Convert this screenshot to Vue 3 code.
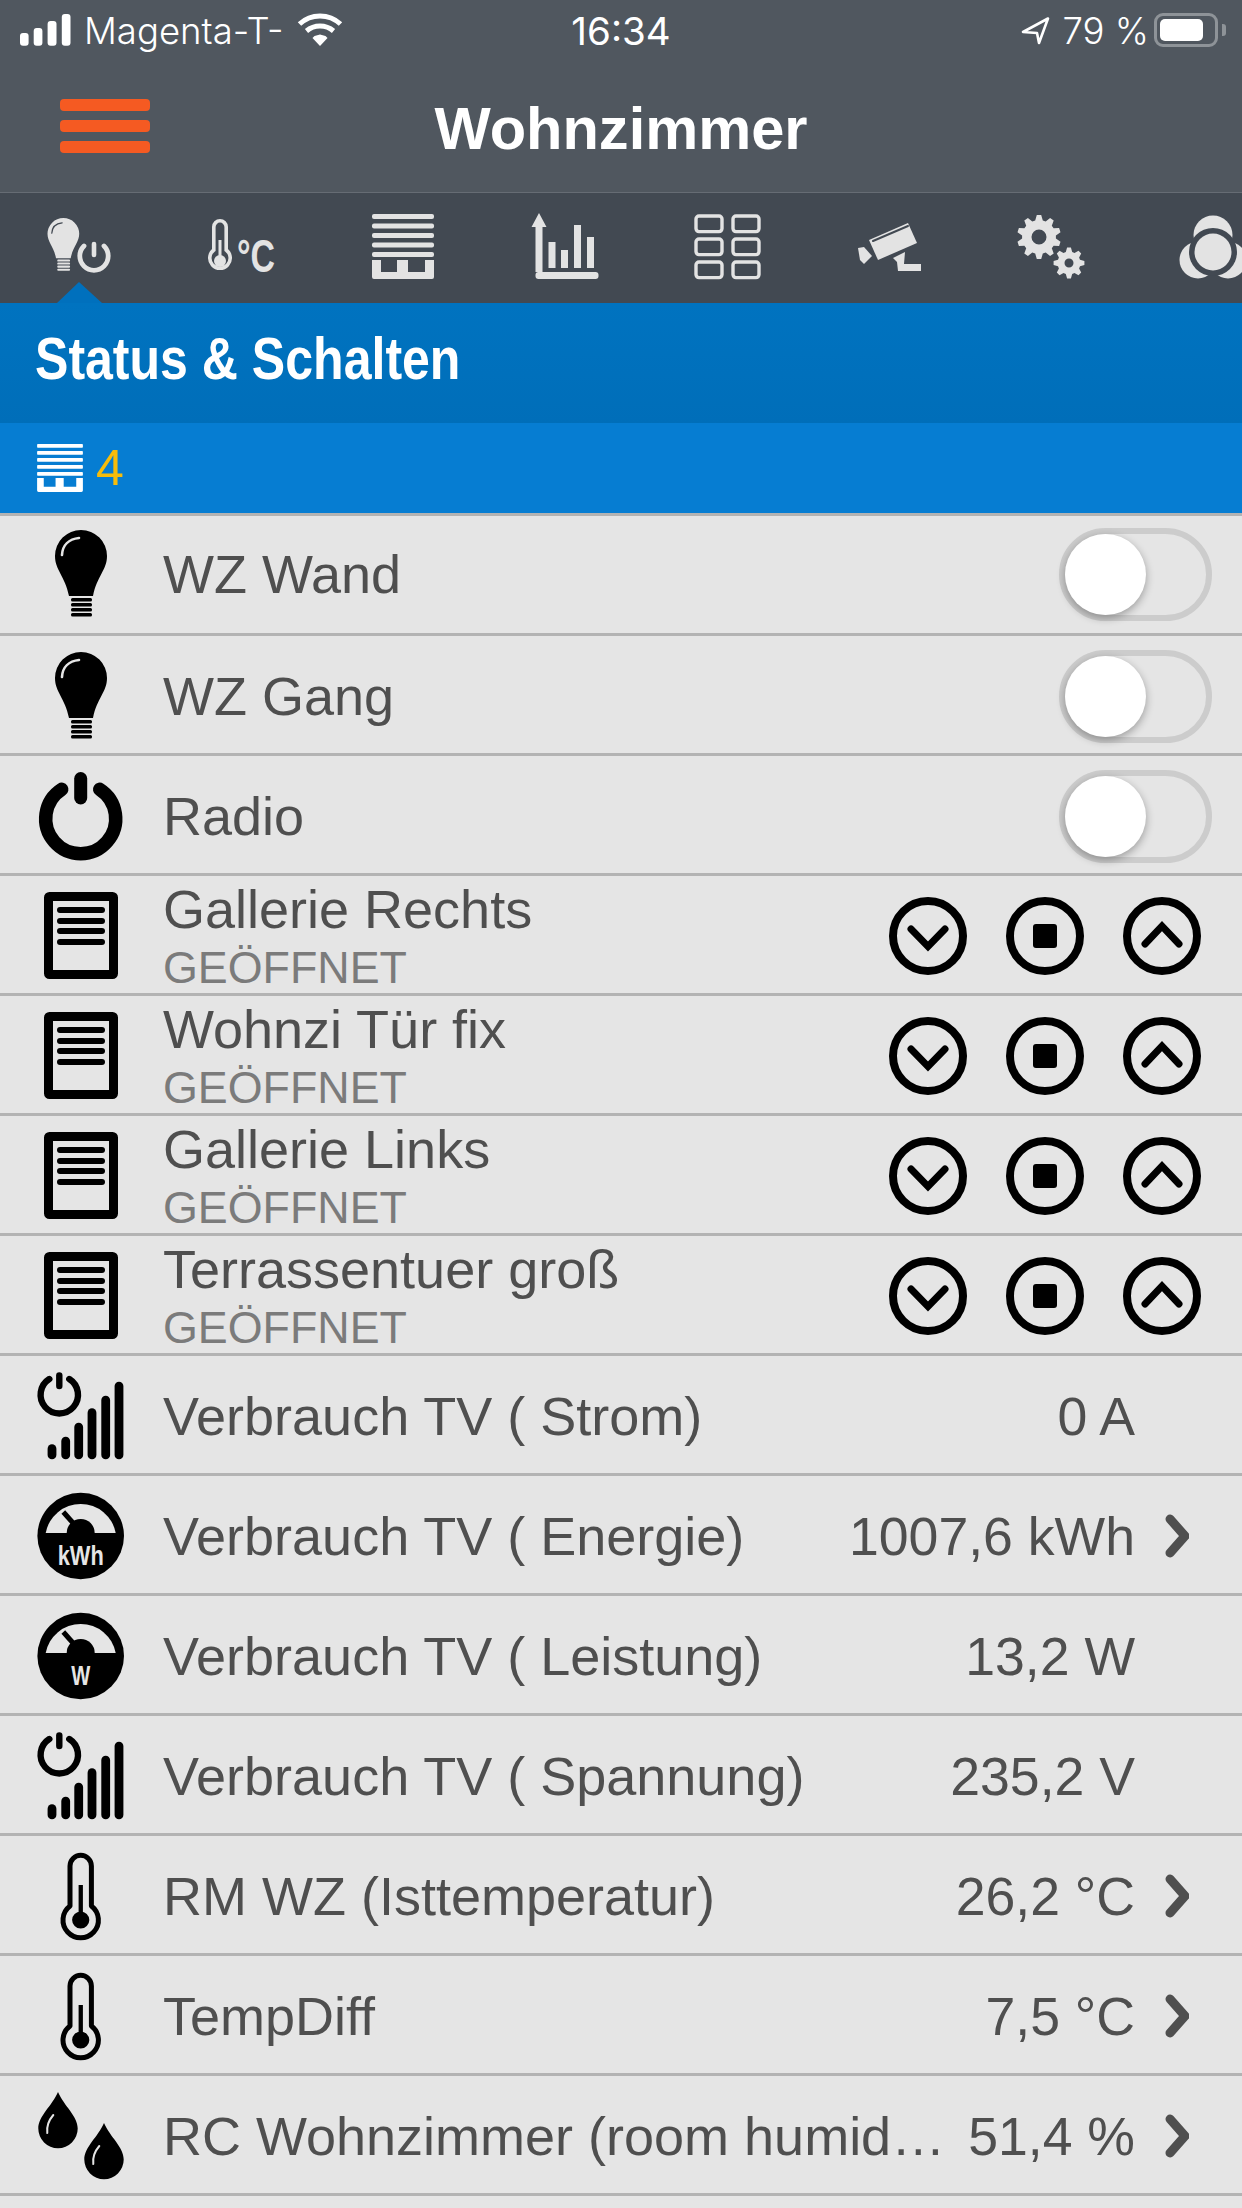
<template>
  <div class="screen">
    <header class="top">
      <div class="status">
        <div class="status-left">
          <svg class="signal" width="52" height="34" viewBox="20 13 52 34">
            <rect x="20" y="33" width="8.6" height="12.7" rx="3" />
            <rect x="33.7" y="28" width="8.7" height="17.7" rx="3" />
            <rect x="47.6" y="21" width="8.9" height="24.7" rx="3" />
            <rect x="61.8" y="14" width="8.7" height="31.7" rx="3" />
          </svg>
          <span class="carrier">Magenta-T-</span>
          <svg class="wifi" width="46" height="34" viewBox="296 13 46 34">
            <path d="M298.5 24 A30 30 0 0 1 339.5 24" />
            <path d="M305.5 31 A21 21 0 0 1 332.5 31" />
            <polygon class="wifi-dot" points="319,46 311.5,38 313.5,36 319,34.5 324.5,36 326.5,38" />
          </svg>
        </div>
        <span class="clock">16:34</span>
        <div class="status-right">
          <svg class="arrow" width="30" height="29" viewBox="1021 16 30 29">
            <path d="M1049 18.5 L1024 32 L1038 33 L1040 43 Z" />
          </svg>
          <span class="percent">79 %</span>
          <span class="battery"><span class="battery-fill"></span></span>
          <span class="battery-nub"></span>
        </div>
      </div>
      <div class="nav">
        <div class="burger"><span></span><span></span><span></span></div>
        <h1>Wohnzimmer</h1>
        <div></div>
      </div>
    </header>

    <nav class="tabs">
      <svg class="tab" viewBox="-2 193 162 110">
        <g transform="translate(47.5 218) scale(0.61)">
          <path :d="bulbBody" />
          <rect v-for="y in bulbStripes" :key="y" x="16" :y="y" width="21" height="3.4" rx="1.5" />
          <path class="cut-tab" d="M7 25 C7.5 15 14 9 24 8" />
        </g>
        <path class="line-tab" stroke-width="4.8" d="M84 246 A14.2 14.2 0 1 0 104 246" />
        <path class="line-tab" stroke-width="4.6" d="M94 244 V255" />
        <polygon class="pointer" points="79,282 102,303 57,303" />
      </svg>
      <svg class="tab" viewBox="160 193 162 110">
        <path class="line-tab" stroke-width="3.6" d="M213.8 250 V227 A6.2 6.2 0 0 1 226.2 227 V250 A10.2 10.2 0 1 1 213.8 250 Z" />
        <circle cx="220" cy="261" r="6" />
        <rect x="218.5" y="240" width="3" height="20" />
        <text class="tab-unit" x="237" y="272" textLength="38" lengthAdjust="spacingAndGlyphs">°C</text>
      </svg>
      <svg class="tab" viewBox="322 193 162 110">
        <g v-for="y in slats" :key="y">
          <rect x="372" :y="y" width="62" height="5" rx="2" />
        </g>
        <path :d="blindBase" />
      </svg>
      <svg class="tab" viewBox="484 193 162 110">
        <path d="M539 213 L546.5 227 H542.5 V272 H535.5 V227 H531.5 Z" />
        <rect x="535.5" y="272" width="63" height="7" rx="3" />
        <rect x="548.5" y="242" width="7" height="26" />
        <rect x="561" y="250" width="7" height="18" />
        <rect x="574" y="225" width="7" height="43" />
        <rect x="587" y="237" width="7" height="31" />
      </svg>
      <svg class="tab" viewBox="646 193 162 110">
        <g v-for="r in gridCells" :key="r.x + '-' + r.y">
          <rect class="line-tab" stroke-width="3.4" :x="r.x" :y="r.y" width="26" height="15.6" rx="3" />
        </g>
      </svg>
      <svg class="tab" viewBox="808 193 162 110">
        <polygon points="869,240 908,223 917,243 878,260" />
        <line class="cut-tab" x1="873" y1="241" x2="908" y2="226" />
        <polygon points="858,248 864,247 872,256 864,264 860,260" />
        <polygon points="893,258 905,252 904,264 921,264 921,271 898,271 897,262" />
      </svg>
      <svg class="tab" viewBox="970 193 162 110">
        <path fill-rule="evenodd" :d="gearBig" />
        <path fill-rule="evenodd" :d="gearSmall" />
      </svg>
      <svg class="tab" viewBox="1132 193 162 110">
        <circle cx="1213" cy="235" r="19.5" />
        <circle cx="1198" cy="260" r="18.5" />
        <circle cx="1228" cy="260" r="18.5" />
        <circle class="dark" cx="1213" cy="252" r="24" />
        <circle cx="1213" cy="252" r="18.5" />
      </svg>
    </nav>

    <div class="section-title"><span>Status &amp; Schalten</span></div>
    <div class="section-sub">
      <svg class="sub-icon" width="46" height="48" viewBox="372 214 62 65">
        <g v-for="y in slats" :key="y">
          <rect x="372" :y="y" width="62" height="5" rx="1" />
        </g>
        <path :d="blindBase" />
      </svg>
      <span>4</span>
    </div>

    <ul class="list">
      <li v-for="row in rows" :key="row.name" class="row">
        <svg class="icon" width="163" height="117" viewBox="0 0 163 117">
          <g v-if="row.icon === 'bulb'" transform="translate(55 16)">
            <path :d="bulbBody" />
            <rect v-for="y in bulbStripes" :key="y" x="16" :y="y" width="21" height="3.4" rx="1.5" />
            <path class="cut" d="M7 25 C7.5 15 14 9 24 8" />
          </g>
          <g v-else-if="row.icon === 'power'" transform="translate(30 9)">
            <path class="line" stroke-width="13.5" d="M31.7 24.3 A35 35 0 1 0 69.7 24.3" />
            <path class="line" stroke-width="13" d="M50.7 13.5 V33" />
          </g>
          <g v-else-if="row.icon === 'shutter'">
            <rect class="line square" stroke-width="9" x="48.5" y="20.5" width="65" height="78" rx="1" />
            <rect v-for="y in shutterLines" :key="y" x="57" :y="y" width="48" height="6" rx="3" />
          </g>
          <g v-else-if="row.icon === 'signal'" transform="translate(30 4)">
            <path class="line" stroke-width="6.4" d="M19.3 19 A18.7 18.7 0 1 0 39.3 19" />
            <path class="line" stroke-width="6.4" d="M29.3 15.5 V26" />
            <rect v-for="b in signalBars" :key="b.x" :x="b.x" :y="b.y" width="8.8" :height="99.3 - b.y" rx="4.4" />
          </g>
          <g v-else-if="row.icon === 'gauge'" transform="translate(80.7 60)">
            <circle r="43.3" />
            <path class="dial" d="M-35 -3 A35.6 35.6 0 0 1 35 -3 Z" />
            <circle cy="-3" r="14" />
            <path class="needle" d="M-17.4 -24 L-5 -10" />
            <text class="dial-text" :x="0" y="29" :textLength="row.unit === 'kWh' ? 46 : 19" lengthAdjust="spacingAndGlyphs" text-anchor="middle">{{ row.unit }}</text>
          </g>
          <g v-else-if="row.icon === 'thermo'" transform="translate(30 4)">
            <path class="line square" stroke-width="5" d="M40 66 V26 A10.7 10.7 0 0 1 61.4 26 V66 A17.7 17.7 0 1 1 40 66 Z" />
            <circle cx="50.7" cy="80" r="8.6" />
            <rect x="48.6" y="45" width="4.3" height="32" />
          </g>
          <g v-else-if="row.icon === 'drops'" transform="translate(30 -236)">
            <path :d="dropPath" />
            <path class="cut thin" d="M23.3 275 C19 280 16.5 287 17.3 293" />
            <g transform="translate(46 31)">
              <path :d="dropPath" />
              <path class="cut thin" d="M23.3 275 C19 280 16.5 287 17.3 293" />
            </g>
          </g>
        </svg>

        <div class="label" :class="{ 'has-sub': row.sub }">
          <div class="name">{{ row.name }}</div>
          <div v-if="row.sub" class="sub">{{ row.sub }}</div>
        </div>

        <div v-if="row.kind === 'toggle'" class="switch"><span class="knob"></span></div>

        <div v-else-if="row.kind === 'shutter'" class="buttons">
          <svg v-for="b in shutterButtons" :key="b" width="78" height="78" viewBox="-39 -39 78 78">
            <circle class="ring" r="35" />
            <path v-if="b === 'down'" class="line" stroke-width="7" d="M-17 -7 L0 10.5 L17 -7" />
            <rect v-else-if="b === 'stop'" x="-12" y="-12" width="24" height="24" rx="3" />
            <path v-else class="line" stroke-width="7" d="M-17 8 L0 -10 L17 8" />
          </svg>
        </div>

        <template v-else>
          <div class="value">{{ row.value }}</div>
          <div class="chevron-slot">
            <svg v-if="row.more" width="24" height="44" viewBox="0 0 24 44">
              <path d="M5 5 L20 22 L5 39" />
            </svg>
          </div>
        </template>
      </li>
    </ul>
  </div>
</template>

<script setup>
// dial/bulb outlines are shared between the tab bar and the list
const bulbBody = 'M26 0 A26 26 0 0 1 52 26 C52 40 42 46 38 66 H14 C10 46 0 40 0 26 A26 26 0 0 1 26 0 Z'
const bulbStripes = [68, 73, 78, 83]
const blindBase = 'M372 260 H381 V272 H397 V260 H408 V272 H425 V260 H434 V277 Q434 279 432 279 H374 Q372 279 372 277 Z'
const dropPath = 'M28 252 C34 266 47.7 276 47.7 288.5 A19.7 19.7 0 1 1 8.3 288.5 C8.3 276 22 266 28 252 Z'

const slats = [214, 223.5, 233, 242.5, 252]
const shutterLines = [31, 42, 52, 63]
const shutterButtons = ['down', 'stop', 'up']

const gridCells = []
for (const x of [696, 733]) {
  for (const y of [216, 239, 262]) gridCells.push({ x, y })
}

const signalBars = [
  { x: 17.6, y: 84.3 },
  { x: 31.3, y: 76.7 },
  { x: 44.3, y: 62.7 },
  { x: 57.6, y: 48.3 },
  { x: 71.3, y: 35.7 },
  { x: 84.6, y: 21.7 }
]

function gear(cx, cy, outer, root, teeth, hole) {
  let d = ''
  const step = (Math.PI * 2) / teeth
  for (let i = 0; i < teeth; i++) {
    const a = i * step - Math.PI / 2
    const pts = [
      [root, a - step * 0.36],
      [outer, a - step * 0.16],
      [outer, a + step * 0.16],
      [root, a + step * 0.36]
    ]
    for (const [r, t] of pts) {
      d += (d ? 'L' : 'M') + (cx + Math.cos(t) * r).toFixed(1) + ' ' + (cy + Math.sin(t) * r).toFixed(1) + ' '
    }
  }
  d += 'Z '
  d += `M${cx - hole} ${cy} A${hole} ${hole} 0 1 0 ${cx + hole} ${cy} A${hole} ${hole} 0 1 0 ${cx - hole} ${cy} Z`
  return d
}
const gearBig = gear(1039, 237, 22, 17, 10, 7.5)
const gearSmall = gear(1069, 263, 15.5, 11.5, 8, 4.5)

const shutterRow = (name) => ({ icon: 'shutter', name, sub: 'GEÖFFNET', kind: 'shutter' })

const rows = [
  { icon: 'bulb', name: 'WZ Wand', kind: 'toggle' },
  { icon: 'bulb', name: 'WZ Gang', kind: 'toggle' },
  { icon: 'power', name: 'Radio', kind: 'toggle' },
  shutterRow('Gallerie Rechts'),
  shutterRow('Wohnzi Tür fix'),
  shutterRow('Gallerie Links'),
  shutterRow('Terrassentuer groß'),
  { icon: 'signal', name: 'Verbrauch TV ( Strom)', value: '0 A' },
  { icon: 'gauge', unit: 'kWh', name: 'Verbrauch TV ( Energie)', value: '1007,6 kWh', more: true },
  { icon: 'gauge', unit: 'W', name: 'Verbrauch TV ( Leistung)', value: '13,2 W' },
  { icon: 'signal', name: 'Verbrauch TV ( Spannung)', value: '235,2 V' },
  { icon: 'thermo', name: 'RM WZ (Isttemperatur)', value: '26,2 °C', more: true },
  { icon: 'thermo', name: 'TempDiff', value: '7,5 °C', more: true },
  { icon: 'drops', name: 'RC Wohnzimmer (room humid…', value: '51,4 %', more: true }
]
</script>

<style scoped>
.screen {
  width: 1242px;
  height: 2208px;
  overflow: hidden;
  background: #e5e5e5;
  font-family: "Liberation Sans", Arial, sans-serif;
}

.top {
  height: 192px;
  background: #50575f;
  color: #fff;
}

.status {
  height: 60px;
  display: grid;
  grid-template-columns: 1fr auto 1fr;
  align-items: center;
  font-family: Inter, "Liberation Sans", sans-serif;
  font-weight: 300;
  font-size: 36.5px;
}

.status-left {
  display: flex;
  align-items: center;
  padding-left: 20px;
}

.signal {
  fill: #fff;
}

.carrier {
  margin-left: 12px;
  padding-top: 2px;
}

.wifi {
  margin-left: 13px;
  fill: none;
  stroke: #fff;
  stroke-width: 5;
}

.wifi-dot {
  fill: #fff;
  stroke: none;
}

.clock {
  font-weight: 400;
  font-size: 38.5px;
  padding-top: 2px;
}

.status-right {
  display: flex;
  align-items: center;
  justify-content: flex-end;
  padding-right: 16px;
}

.arrow {
  fill: none;
  stroke: #fff;
  stroke-width: 2.6;
  stroke-linejoin: round;
}

.percent {
  margin-left: 13px;
  padding-top: 2px;
}

.battery {
  margin-left: 5px;
  width: 64px;
  height: 34px;
  box-sizing: border-box;
  border: 3px solid #8e9398;
  border-radius: 9px;
  padding: 3px;
  display: flex;
}

.battery-fill {
  width: 43px;
  background: #fff;
  border-radius: 5px;
}

.battery-nub {
  margin-left: 4px;
  width: 4px;
  height: 12px;
  background: #8e9398;
  border-radius: 0 3px 3px 0;
}

.nav {
  height: 132px;
  display: grid;
  grid-template-columns: 1fr auto 1fr;
  align-items: center;
}

.nav h1 {
  margin: 0;
  padding-top: 5px;
  font-size: 59.6px;
  font-weight: 700;
  line-height: 1;
}

.burger {
  width: 90px;
  margin-left: 60px;
  display: flex;
  flex-direction: column;
  gap: 9px;
}

.burger span {
  height: 12px;
  border-radius: 4px;
  background: #f55a22;
}

.tabs {
  border-top: 1px solid #666c74;
  height: 110px;
  background: #424952;
  display: flex;
  overflow: hidden;
}

.tab {
  flex: none;
  width: 162px;
  height: 110px;
  fill: #e3e3e3;
}

.tab:first-child {
  margin-left: -2px;
}

.line-tab {
  fill: none;
  stroke: #e3e3e3;
  stroke-linecap: round;
}

.cut-tab {
  fill: none;
  stroke: #424952;
  stroke-width: 2;
  stroke-linecap: round;
}

.pointer {
  fill: #0070bd;
}

.dark {
  fill: #424952;
}

.tab-unit {
  font-family: "Liberation Sans", sans-serif;
  font-weight: 700;
  font-size: 47px;
  fill: #e3e3e3;
}

.section-title {
  height: 120px;
  box-sizing: border-box;
  padding: 0 0 10px 35px;
  display: flex;
  align-items: center;
  background: linear-gradient(#0073c0, #006eb9);
  color: #fff;
  font-weight: 700;
  font-size: 60px;
}

/* no condensed face installed, so squeeze the bold one */
.section-title span {
  display: inline-block;
  white-space: nowrap;
  transform: scaleX(0.834);
  transform-origin: left center;
}

.section-sub {
  height: 90px;
  display: flex;
  align-items: center;
  gap: 13px;
  padding-left: 37px;
  background: #067dd2;
  color: #f7bc0a;
  font-size: 50px;
}

.sub-icon {
  fill: #fff;
}

.list {
  list-style: none;
  margin: 0;
  padding: 0;
  border-top: 3px solid #b3b3b3;
}

.row {
  height: 120px;
  box-sizing: border-box;
  padding-top: 2px;
  border-bottom: 3px solid #b3b3b3;
  display: flex;
  align-items: center;
  color: #4f4f4f;
  font-size: 53.6px;
}

/* first row sits 2px higher than the rest */
.row:first-child {
  padding-top: 0;
  padding-bottom: 2px;
}

.row:first-child .icon {
  margin-top: 0;
  transform: translateY(-1px);
}

.icon {
  flex: none;
  margin-top: -2px;
  fill: #000;
}

.line {
  fill: none;
  stroke: #000;
  stroke-linecap: round;
}

.line.square {
  stroke-linecap: butt;
  stroke-linejoin: round;
}

.cut {
  fill: none;
  stroke: #e5e5e5;
  stroke-width: 2.6;
  stroke-linecap: round;
}

.cut.thin {
  stroke-width: 2;
}

.dial {
  fill: #e5e5e5;
}

.needle {
  fill: none;
  stroke: #000;
  stroke-width: 5;
}

.dial-text {
  fill: #e5e5e5;
  font-family: "Liberation Sans", sans-serif;
  font-weight: 700;
  font-size: 27px;
}

.label {
  flex: 1;
  min-width: 0;
  font-size: 54px;
}

.label.has-sub {
  align-self: flex-start;
  margin-top: 1px;
}

.name {
  line-height: 60px;
  white-space: nowrap;
}

.sub {
  line-height: 56px;
  font-size: 44.8px;
  color: #7b7b7b;
}

.switch {
  flex: none;
  width: 153px;
  height: 93px;
  margin-top: 2px;
  margin-right: 30px;
  box-sizing: border-box;
  border: 6px solid #cccccc;
  border-radius: 47px;
}

.knob {
  display: block;
  width: 81px;
  height: 81px;
  border-radius: 50%;
  background: #fff;
  box-shadow: 0 3px 9px rgba(0, 0, 0, 0.32);
}

.buttons {
  flex: none;
  display: flex;
  gap: 39px;
  margin-right: 41px;
}

.ring {
  fill: none;
  stroke: #000;
  stroke-width: 8;
}

.value {
  flex: none;
  margin-left: 26px;
  white-space: nowrap;
}

.chevron-slot {
  flex: none;
  width: 107px;
  padding-left: 30px;
  box-sizing: border-box;
  display: flex;
}

.chevron-slot svg {
  fill: none;
  stroke: #4f4f4f;
  stroke-width: 9;
  stroke-linecap: round;
  stroke-linejoin: round;
}
</style>
